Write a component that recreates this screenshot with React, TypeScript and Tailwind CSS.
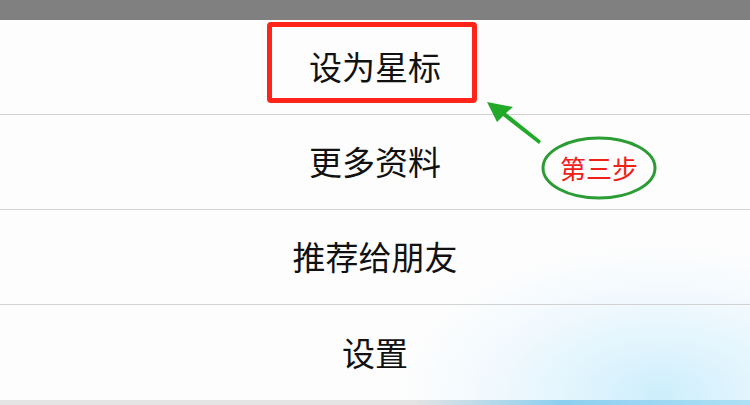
import React from "react";

const rows = ["设为星标", "更多资料", "推荐给朋友", "设置"];

const MenuRow = ({ label, last = false }: { label: string; last?: boolean }) => (
  <div
    className={
      "flex h-[95px] items-center justify-center text-[33px] text-[#111] " +
      (last ? "" : "border-b border-[#d2d2d2]")
    }
  >
    {label}
  </div>
);

const App = () => {
  return (
    <div
      className="relative h-[405px] w-[750px] overflow-hidden bg-[radial-gradient(ellipse_260px_150px_at_660px_395px,#cdeefc_0%,#dff4fd_30%,#f1f9fe_65%,#fdfdfd_100%)]"
      style={{ fontFamily: '"Noto Sans CJK SC", "Noto Sans", sans-serif' }}
    >
      <div className="h-5 bg-[#808080]" />
      {rows.map((r, i) => (
        <MenuRow key={r} label={r} last={i === rows.length - 1} />
      ))}
      <div className="h-[5px] bg-[linear-gradient(90deg,#e4e4e4_0%,#e4e4e4_55%,#8ccfef_75%,#aee0f5_100%)]" />

      {/* annotations */}
      <div className="absolute left-[267px] top-[22px] h-[81px] w-[210px] rounded-[4px] border-[5px] border-[#ff2419]" />

      <svg className="absolute left-0 top-0" width="750" height="405" viewBox="0 0 750 405">
        <path d="M487 102 L513 107 L506 113 L541 141 L539 144 L503 116 L497 122 Z" fill="#22a92a" />
        <ellipse cx="599" cy="168" rx="56" ry="30" fill="none" stroke="#2c9c34" strokeWidth="3" />
      </svg>
      <div className="absolute left-[543px] top-[152px] flex h-[32px] w-[112px] items-center justify-center text-[26px] leading-none text-[#f02018]">
        第三步
      </div>
    </div>
  );
};

export default App;
